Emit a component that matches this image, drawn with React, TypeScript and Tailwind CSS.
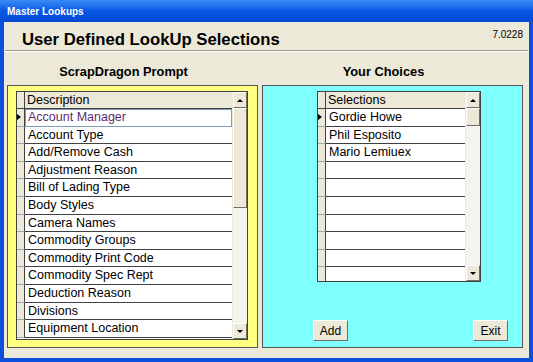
import React from 'react';

const prompts = [
  'Account Manager',
  'Account Type',
  'Add/Remove Cash',
  'Adjustment Reason',
  'Bill of Lading Type',
  'Body Styles',
  'Camera Names',
  'Commodity Groups',
  'Commodity Print Code',
  'Commodity Spec Rept',
  'Deduction Reason',
  'Divisions',
  'Equipment Location',
];

const choices = ['Gordie Howe', 'Phil Esposito', 'Mario Lemiuex', '', '', '', '', '', '', ''];

const ArrowBtn = ({ dir }: { dir: 'up' | 'down' }) => (
  <div className="h-[16px] shrink-0 bg-[#ECE9D8] border border-t-white border-l-white border-r-[#716F64] border-b-[#716F64] flex items-center justify-center">
    {dir === 'up' ? (
      <div className="w-0 h-0 border-l-[3px] border-r-[3px] border-b-[3px] border-l-transparent border-r-transparent border-b-black" />
    ) : (
      <div className="w-0 h-0 border-l-[3px] border-r-[3px] border-t-[3px] border-l-transparent border-r-transparent border-t-black" />
    )}
  </div>
);

type GridProps = {
  header: string;
  items: string[];
  thumb: number;
  className: string;
  focusFirst?: boolean;
};

const Grid = ({ header, items, thumb, className, focusFirst }: GridProps) => (
  <div className={`flex border border-[#404040] bg-white overflow-hidden ${className}`}>
    <div className="flex-1 flex flex-col min-w-0">
      <div className="flex h-[17px] shrink-0 bg-[#ECE9D8] border-b border-[#404040]">
        <div className="w-[8px] border-r border-[#404040]" />
        <div className="flex-1 pl-[2px] text-[12.5px] leading-[17px] text-black">{header}</div>
      </div>
      {items.map((it, i) => (
        <div key={i} className="flex h-[17.6px] shrink-0">
          <div className="w-[8px] bg-[#ECE9D8] border-r border-[#404040] border-b border-b-[#A7A6AA] flex items-center">
            {i === 0 && (
              <div className="w-0 h-0 border-t-[3.5px] border-b-[3.5px] border-l-[4px] border-t-transparent border-b-transparent border-l-black" />
            )}
          </div>
          <div
            className={`flex-1 pl-[3px] text-[12.5px] leading-[16px] whitespace-nowrap border-b border-[#404040] ${
              i === 0 && focusFirst ? 'text-[#5E2C6E] outline outline-1 -outline-offset-1 outline-[#7F9DB9]' : 'text-black'
            }`}
          >
            {it}
          </div>
        </div>
      ))}
    </div>
    <div className="w-[15px] shrink-0 flex flex-col bg-[#F4F3EE] border-l border-[#ECE9D8]">
      <ArrowBtn dir="up" />
      <div
        className="shrink-0 bg-[#ECE9D8] border border-t-white border-l-white border-r-[#716F64] border-b-[#716F64]"
        style={{ height: thumb }}
      />
      <div className="flex-1" />
      <ArrowBtn dir="down" />
    </div>
  </div>
);

const Btn = ({ label }: { label: string }) => (
  <button className="w-[35px] h-[21px] bg-[#ECE9D8] border border-t-white border-l-white border-r-[#716F64] border-b-[#716F64] text-[12px] text-black leading-none">
    {label}
  </button>
);

export default function App() {
  return (
    <div
      className="w-[533px] h-[362px] flex flex-col bg-[#0A50DC] overflow-hidden"
      style={{ fontFamily: '"Liberation Sans", Arial, sans-serif' }}
    >
      <div className="h-[22px] shrink-0 bg-gradient-to-b from-[#3B8CF6] via-[#0658E6] to-[#0648D4] flex items-center pl-[7px]">
        <span className="text-white font-bold text-[10px]">Master Lookups</span>
      </div>
      <div className="flex-1 mx-[4px] mb-[4px] bg-[#ECE9D8] flex flex-col">
        <div className="h-[28px] shrink-0 flex justify-between pl-[18px] pr-[6px]">
          <div className="text-[16.7px] font-bold text-black leading-none pt-[10px]">User Defined LookUp Selections</div>
          <div className="text-[10px] text-black pt-[5px]">7.0228</div>
        </div>
        <div className="h-[2px] shrink-0 mx-[1px] border-t border-[#9D9B8F] border-b border-b-white" />
        <div className="h-[33px] shrink-0 flex pl-[3px] pr-[6px] pt-[10px]">
          <div className="w-[251px] text-center pr-[18px] text-[12.8px] font-bold text-black">ScrapDragon Prompt</div>
          <div className="w-[4px]" />
          <div className="flex-1 text-center pr-[18px] text-[12.8px] font-bold text-black">Your Choices</div>
        </div>
        <div className="h-[263px] shrink-0 flex gap-[4px] pl-[3px] pr-[6px]">
          <div className="w-[251px] bg-[#FFFF80] border border-[#555] pt-[5px] pl-[8px] pr-[9px]">
            <Grid header="Description" items={prompts} thumb={100} className="h-[249px]" focusFirst />
          </div>
          <div className="flex-1 bg-[#80FFFF] border border-[#555] flex flex-col pt-[5px]">
            <div className="pl-[54px]">
              <Grid header="Selections" items={choices} thumb={18} className="w-[164px] h-[191px]" />
            </div>
            <div className="flex justify-between pl-[50px] pr-[14px] mt-[38px]">
              <Btn label="Add" />
              <Btn label="Exit" />
            </div>
          </div>
        </div>
      </div>
    </div>
  );
}
